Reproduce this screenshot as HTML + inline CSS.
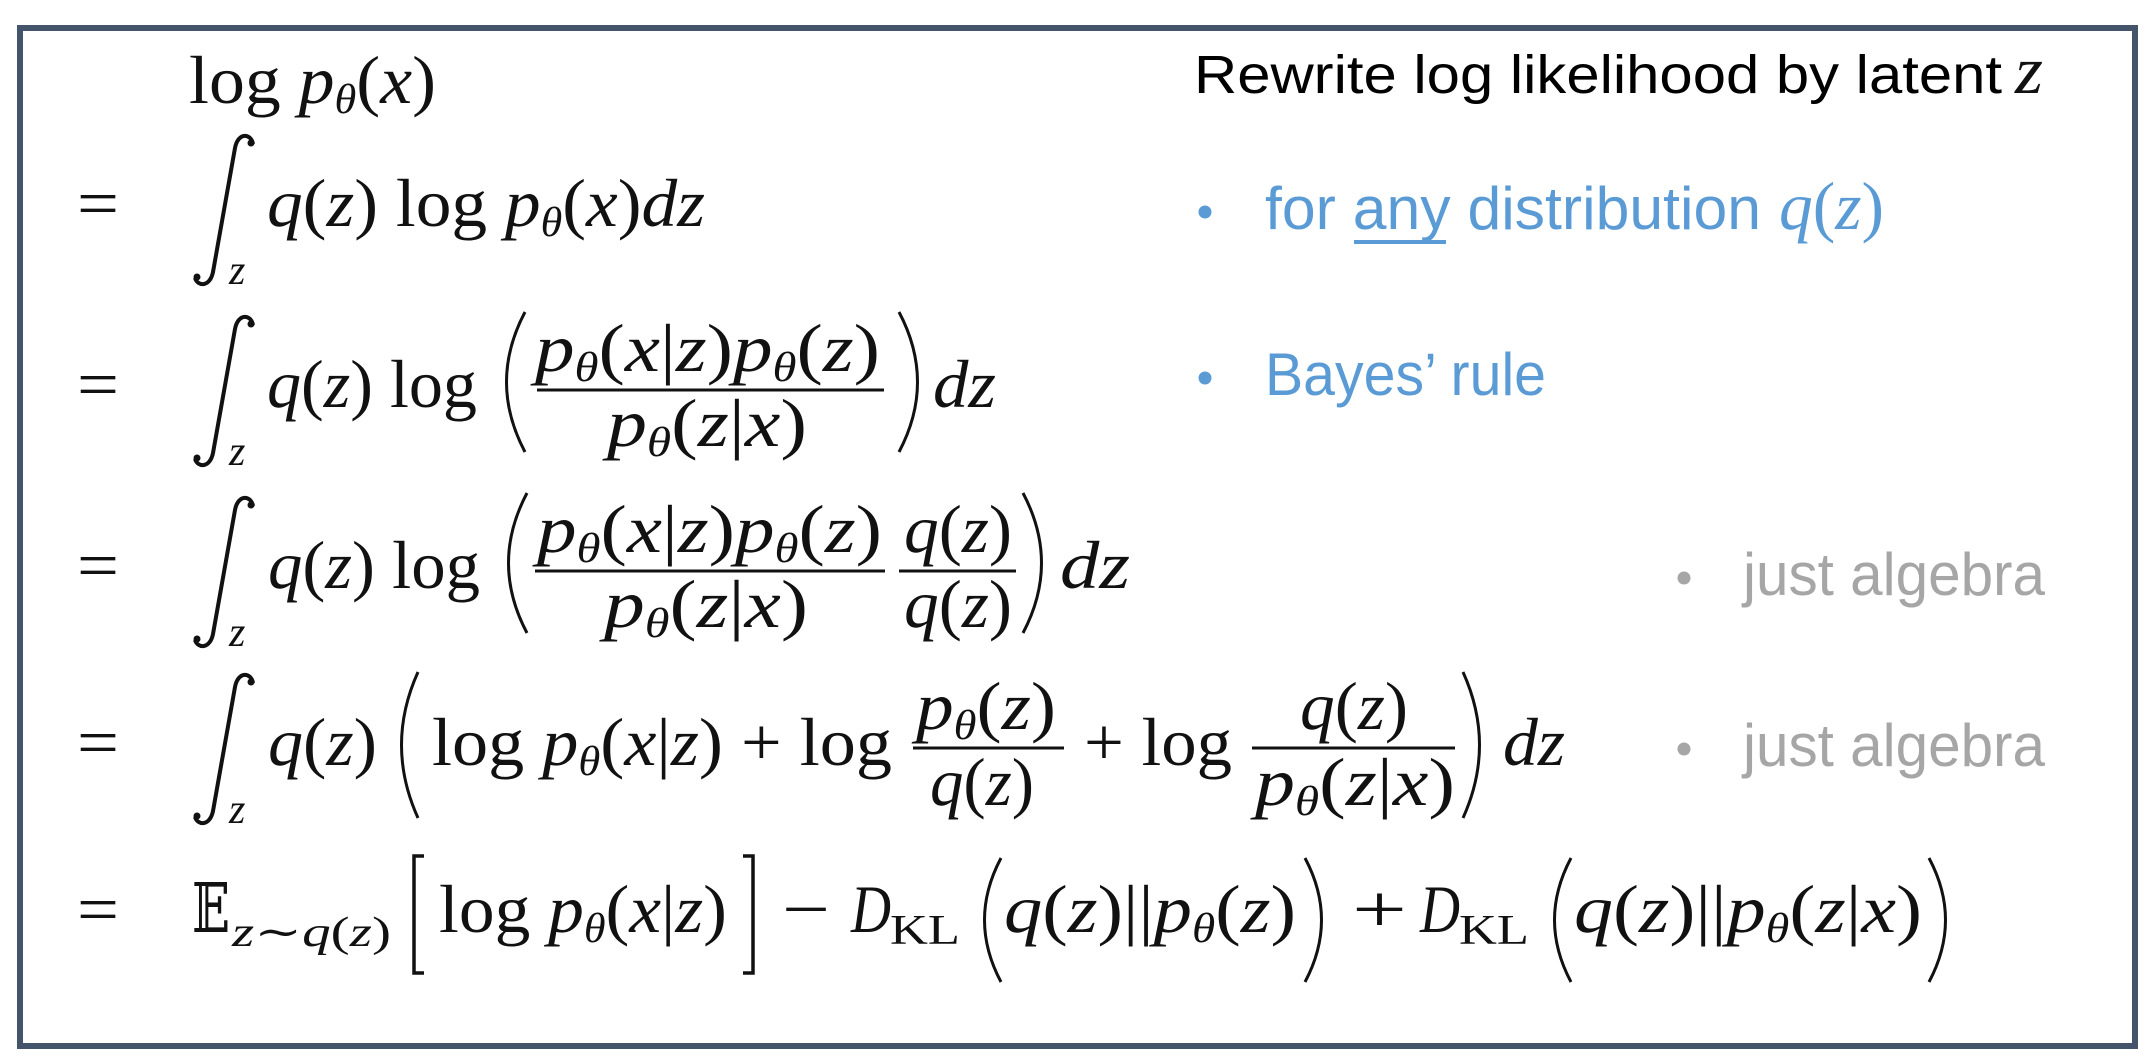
<!DOCTYPE html>
<html><head><meta charset="utf-8"><style>
html,body{margin:0;padding:0;background:#fff;}
svg{display:block;}
.m{font-family:"Liberation Serif","DejaVu Serif",serif;font-size:68px;fill:#111;}
.i{font-style:italic;}
.s{font-size:42px;}
.c{font-family:"Liberation Sans Narrow","Liberation Sans","DejaVu Sans",sans-serif;}
</style></head><body>
<svg width="2152" height="1064" viewBox="0 0 2152 1064" xmlns="http://www.w3.org/2000/svg">
<rect x="0" y="0" width="2152" height="1064" fill="#fff"/>
<rect x="20" y="28" width="2115" height="1018" fill="none" stroke="#44546a" stroke-width="6"/>

<defs>
<g id="int">
<path d="M253,-82 C251,-93 238,-94 235,-78 L213,46 C210,61 198,61 195,52" fill="none" stroke="#111" stroke-width="4"/>
<circle cx="251" cy="-83" r="3.5" fill="#111"/><circle cx="197" cy="51" r="3.5" fill="#111"/>
<text x="229" y="58" class="m i" style="font-size:42px">z</text>
</g>
</defs>

<text x="189" y="103" class="m" textLength="247" lengthAdjust="spacingAndGlyphs">log <tspan class="i">p</tspan><tspan class="i s" dy="10">θ</tspan><tspan dy="-10">(</tspan><tspan class="i">x</tspan>)</text>

<g class="m">
<text x="77" y="226" textLength="42" lengthAdjust="spacingAndGlyphs">=</text>
<text x="77" y="407" textLength="42" lengthAdjust="spacingAndGlyphs">=</text>
<text x="77" y="588" textLength="42" lengthAdjust="spacingAndGlyphs">=</text>
<text x="77" y="765" textLength="42" lengthAdjust="spacingAndGlyphs">=</text>
<text x="77" y="932" textLength="42" lengthAdjust="spacingAndGlyphs">=</text>
</g>

<use href="#int" transform="translate(0,226)"/>
<text x="267" y="226" class="m" textLength="438" lengthAdjust="spacingAndGlyphs"><tspan class="i">q</tspan>(<tspan class="i">z</tspan>) log <tspan class="i">p</tspan><tspan class="i s" dy="10">θ</tspan><tspan dy="-10">(</tspan><tspan class="i">x</tspan>)<tspan class="i">dz</tspan></text>

<use href="#int" transform="translate(0,407)"/>
<text x="267" y="407" class="m" textLength="210" lengthAdjust="spacingAndGlyphs"><tspan class="i">q</tspan>(<tspan class="i">z</tspan>) log</text>
<path d="M525,312 Q488,382 525,452" fill="none" stroke="#111" stroke-width="3"/>
<text x="535" y="371" class="m" textLength="345" lengthAdjust="spacingAndGlyphs"><tspan class="i">p</tspan><tspan class="i s" dy="10">θ</tspan><tspan dy="-10">(</tspan><tspan class="i">x</tspan>|<tspan class="i">z</tspan>)<tspan class="i">p</tspan><tspan class="i s" dy="10">θ</tspan><tspan dy="-10">(</tspan><tspan class="i">z</tspan>)</text>
<line x1="537" y1="390" x2="884" y2="390" stroke="#111" stroke-width="3"/>
<text x="607" y="446" class="m" textLength="200" lengthAdjust="spacingAndGlyphs"><tspan class="i">p</tspan><tspan class="i s" dy="10">θ</tspan><tspan dy="-10">(</tspan><tspan class="i">z</tspan>|<tspan class="i">x</tspan>)</text>
<path d="M899,312 Q936,382 899,452" fill="none" stroke="#111" stroke-width="3"/>
<text x="933" y="407" class="m i" textLength="63" lengthAdjust="spacingAndGlyphs">dz</text>

<use href="#int" transform="translate(0,588)"/>
<text x="268" y="588" class="m" textLength="212" lengthAdjust="spacingAndGlyphs"><tspan class="i">q</tspan>(<tspan class="i">z</tspan>) log</text>
<path d="M527,493 Q490,563 527,633" fill="none" stroke="#111" stroke-width="3"/>
<text x="537" y="552" class="m" textLength="345" lengthAdjust="spacingAndGlyphs"><tspan class="i">p</tspan><tspan class="i s" dy="10">θ</tspan><tspan dy="-10">(</tspan><tspan class="i">x</tspan>|<tspan class="i">z</tspan>)<tspan class="i">p</tspan><tspan class="i s" dy="10">θ</tspan><tspan dy="-10">(</tspan><tspan class="i">z</tspan>)</text>
<line x1="535" y1="571" x2="885" y2="571" stroke="#111" stroke-width="3"/>
<text x="604" y="627" class="m" textLength="204" lengthAdjust="spacingAndGlyphs"><tspan class="i">p</tspan><tspan class="i s" dy="10">θ</tspan><tspan dy="-10">(</tspan><tspan class="i">z</tspan>|<tspan class="i">x</tspan>)</text>
<text x="904" y="552" class="m" textLength="108" lengthAdjust="spacingAndGlyphs"><tspan class="i">q</tspan>(<tspan class="i">z</tspan>)</text>
<line x1="899" y1="571" x2="1016" y2="571" stroke="#111" stroke-width="3"/>
<text x="904" y="627" class="m" textLength="108" lengthAdjust="spacingAndGlyphs"><tspan class="i">q</tspan>(<tspan class="i">z</tspan>)</text>
<path d="M1023,493 Q1060,563 1023,633" fill="none" stroke="#111" stroke-width="3"/>
<text x="1060" y="588" class="m i" textLength="70" lengthAdjust="spacingAndGlyphs">dz</text>

<use href="#int" transform="translate(0,765)"/>
<text x="268" y="765" class="m" textLength="109" lengthAdjust="spacingAndGlyphs"><tspan class="i">q</tspan>(<tspan class="i">z</tspan>)</text>
<path d="M418,672 Q385,745 418,818" fill="none" stroke="#111" stroke-width="3"/>
<text x="432" y="765" class="m" textLength="460" lengthAdjust="spacingAndGlyphs">log <tspan class="i">p</tspan><tspan class="i s" dy="10">θ</tspan><tspan dy="-10">(</tspan><tspan class="i">x</tspan>|<tspan class="i">z</tspan>) + log</text>
<text x="916" y="729" class="m" textLength="140" lengthAdjust="spacingAndGlyphs"><tspan class="i">p</tspan><tspan class="i s" dy="10">θ</tspan><tspan dy="-10">(</tspan><tspan class="i">z</tspan>)</text>
<line x1="913" y1="748" x2="1064" y2="748" stroke="#111" stroke-width="3"/>
<text x="930" y="805" class="m" textLength="104" lengthAdjust="spacingAndGlyphs"><tspan class="i">q</tspan>(<tspan class="i">z</tspan>)</text>
<text x="1084" y="765" class="m" textLength="148" lengthAdjust="spacingAndGlyphs">+ log</text>
<text x="1300" y="729" class="m" textLength="108" lengthAdjust="spacingAndGlyphs"><tspan class="i">q</tspan>(<tspan class="i">z</tspan>)</text>
<line x1="1252" y1="748" x2="1455" y2="748" stroke="#111" stroke-width="3"/>
<text x="1255" y="805" class="m" textLength="200" lengthAdjust="spacingAndGlyphs"><tspan class="i">p</tspan><tspan class="i s" dy="10">θ</tspan><tspan dy="-10">(</tspan><tspan class="i">z</tspan>|<tspan class="i">x</tspan>)</text>
<path d="M1463,672 Q1496,745 1463,818" fill="none" stroke="#111" stroke-width="3"/>
<text x="1503" y="765" class="m i" textLength="62" lengthAdjust="spacingAndGlyphs">dz</text>

<text x="192" y="932" class="m" textLength="38" lengthAdjust="spacingAndGlyphs" style="font-family:'DejaVu Serif','DejaVu Sans',serif">𝔼</text>
<text x="232" y="946" class="m s" textLength="159" lengthAdjust="spacingAndGlyphs"><tspan class="i">z</tspan>∼<tspan class="i">q</tspan>(<tspan class="i">z</tspan>)</text>
<path d="M424,856 L414,856 L414,973 L424,973" fill="none" stroke="#111" stroke-width="3.5"/>
<text x="439" y="932" class="m" textLength="288" lengthAdjust="spacingAndGlyphs">log <tspan class="i">p</tspan><tspan class="i s" dy="10">θ</tspan><tspan dy="-10">(</tspan><tspan class="i">x</tspan>|<tspan class="i">z</tspan>)</text>
<path d="M743,856 L753,856 L753,973 L743,973" fill="none" stroke="#111" stroke-width="3.5"/>
<text x="782" y="932" class="m" textLength="48" lengthAdjust="spacingAndGlyphs">−</text>
<text x="851" y="932" class="m i" textLength="40" lengthAdjust="spacingAndGlyphs">D</text>
<text x="890" y="944" class="m s" textLength="70" lengthAdjust="spacingAndGlyphs">KL</text>
<path d="M1001,858 Q968,920 1001,982" fill="none" stroke="#111" stroke-width="3"/>
<text x="1004" y="932" class="m" textLength="292" lengthAdjust="spacingAndGlyphs"><tspan class="i">q</tspan>(<tspan class="i">z</tspan>)||<tspan class="i">p</tspan><tspan class="i s" dy="10">θ</tspan><tspan dy="-10">(</tspan><tspan class="i">z</tspan>)</text>
<path d="M1305,858 Q1338,920 1305,982" fill="none" stroke="#111" stroke-width="3"/>
<text x="1352" y="932" class="m" textLength="55" lengthAdjust="spacingAndGlyphs">+</text>
<text x="1420" y="932" class="m i" textLength="40" lengthAdjust="spacingAndGlyphs">D</text>
<text x="1459" y="944" class="m s" textLength="70" lengthAdjust="spacingAndGlyphs">KL</text>
<path d="M1571,858 Q1538,920 1571,982" fill="none" stroke="#111" stroke-width="3"/>
<text x="1574" y="932" class="m" textLength="348" lengthAdjust="spacingAndGlyphs"><tspan class="i">q</tspan>(<tspan class="i">z</tspan>)||<tspan class="i">p</tspan><tspan class="i s" dy="10">θ</tspan><tspan dy="-10">(</tspan><tspan class="i">z</tspan>|<tspan class="i">x</tspan>)</text>
<path d="M1929,858 Q1962,920 1929,982" fill="none" stroke="#111" stroke-width="3"/>

<text x="1194" y="93" class="c" font-size="54" fill="#000" textLength="808" lengthAdjust="spacingAndGlyphs">Rewrite log likelihood by latent</text>
<text x="2015" y="93" class="m i" textLength="28" lengthAdjust="spacingAndGlyphs">z</text>

<circle cx="1205" cy="212" r="6.5" fill="#5b9bd5"/>
<text x="1265" y="229" class="c" font-size="60" fill="#5b9bd5" textLength="496" lengthAdjust="spacingAndGlyphs">for any distribution</text>
<line x1="1354" y1="242" x2="1446" y2="242" stroke="#5b9bd5" stroke-width="4"/>
<text x="1779" y="229" class="m" style="fill:#5b9bd5" textLength="105" lengthAdjust="spacingAndGlyphs"><tspan class="i">q</tspan>(<tspan class="i">z</tspan>)</text>

<circle cx="1205" cy="378" r="6.5" fill="#5b9bd5"/>
<text x="1265" y="395" class="c" font-size="60" fill="#5b9bd5" textLength="281" lengthAdjust="spacingAndGlyphs">Bayes’ rule</text>

<circle cx="1684" cy="578" r="6.5" fill="#a6a6a6"/>
<text x="1743" y="595" class="c" font-size="60" fill="#a6a6a6" textLength="302" lengthAdjust="spacingAndGlyphs">just algebra</text>
<circle cx="1684" cy="749" r="6.5" fill="#a6a6a6"/>
<text x="1743" y="766" class="c" font-size="60" fill="#a6a6a6" textLength="302" lengthAdjust="spacingAndGlyphs">just algebra</text>
</svg>
</body></html>
